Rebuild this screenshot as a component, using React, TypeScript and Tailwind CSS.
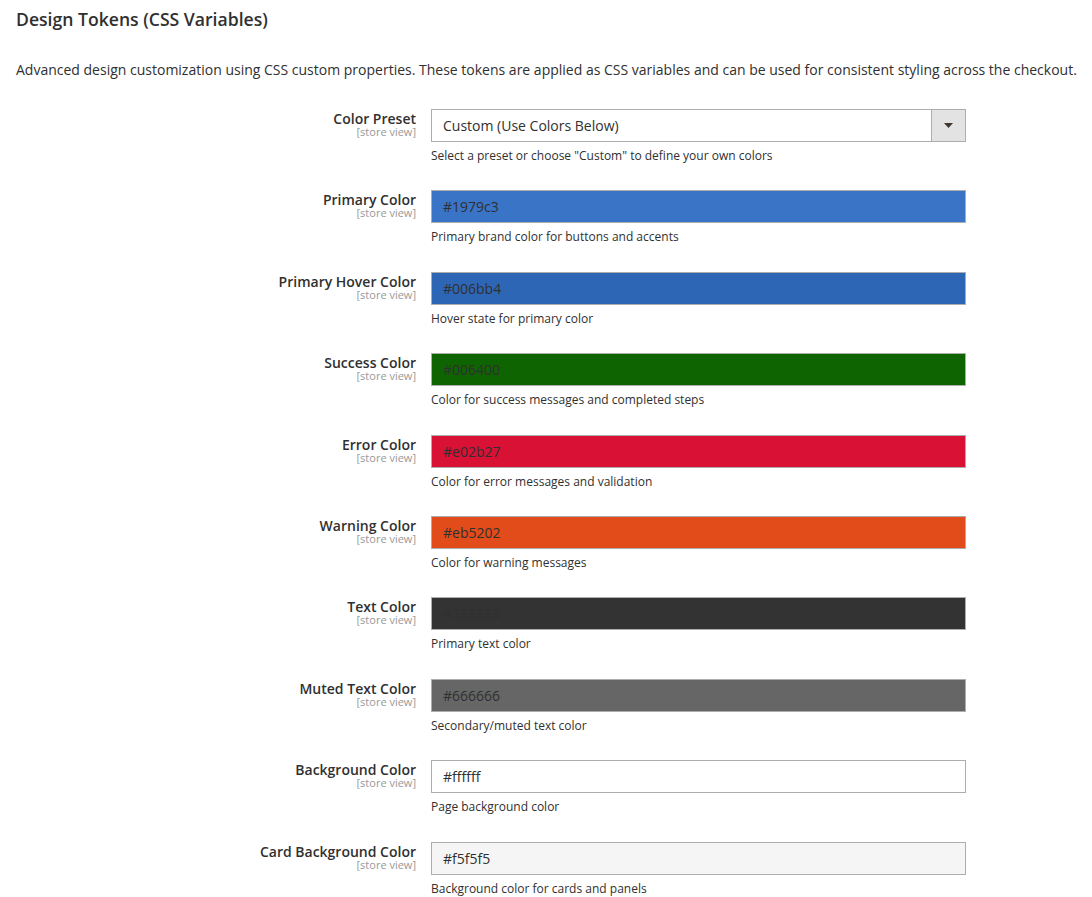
import React from "react";

interface ColorField {
  label: string;
  value: string;
  bg: string;
  note: string;
}

const fields: ColorField[] = [
  { label: "Primary Color", value: "#1979c3", bg: "bg-[#3a74c6]", note: "Primary brand color for buttons and accents" },
  { label: "Primary Hover Color", value: "#006bb4", bg: "bg-[#2e66b6]", note: "Hover state for primary color" },
  { label: "Success Color", value: "#006400", bg: "bg-[#0e6400]", note: "Color for success messages and completed steps" },
  { label: "Error Color", value: "#e02b27", bg: "bg-[#d81135]", note: "Color for error messages and validation" },
  { label: "Warning Color", value: "#eb5202", bg: "bg-[#e24c1a]", note: "Color for warning messages" },
  { label: "Text Color", value: "#333333", bg: "bg-[#333333]", note: "Primary text color" },
  { label: "Muted Text Color", value: "#666666", bg: "bg-[#666666]", note: "Secondary/muted text color" },
  { label: "Background Color", value: "#ffffff", bg: "bg-white", note: "Page background color" },
  { label: "Card Background Color", value: "#f5f5f5", bg: "bg-[#f5f5f5]", note: "Background color for cards and panels" },
];

const Label: React.FC<{ text: string }> = ({ text }) => (
  <div className="w-[400px] shrink-0 text-right pt-[3px]">
    <div className="text-[14px] leading-[14px] font-semibold text-[#303030]">{text}</div>
    <div className="text-[11px] leading-[12px] text-[#999999]">[store view]</div>
  </div>
);

const Row: React.FC<{ label: string; note: string; children: React.ReactNode }> = ({ label, note, children }) => (
  <div className="flex gap-[15px] pb-[26.4px]">
    <Label text={label} />
    <div className="w-[535px] shrink-0">
      {children}
      <p className="mt-[6px] text-[12px] leading-[16px] text-[#303030]">{note}</p>
    </div>
  </div>
);

export default function App() {
  return (
    <div className="min-h-screen bg-white px-4 pt-[8px] text-[#303030]" style={{ fontFamily: '"Open Sans", "Liberation Sans", sans-serif' }}>
      <h2 className="text-[17.6px] leading-[22px] font-semibold text-[#303030]">Design Tokens (CSS Variables)</h2>
      <p className="mt-[30px] text-[14px] leading-[20px] whitespace-nowrap">
        Advanced design customization using CSS custom properties. These tokens are applied as CSS variables and can be used for consistent styling across the checkout.
      </p>

      <div className="mt-[29px]">
        <Row label="Color Preset" note={'Select a preset or choose "Custom" to define your own colors'}>
          <div className="flex h-[33px] border border-[#adadad] bg-white">
            <div className="flex-1 flex items-center px-[11px] text-[14px]">Custom (Use Colors Below)</div>
            <div className="w-[34px] flex items-center justify-center border-l border-[#adadad] bg-[#e3e3e3]">
              <svg width="9" height="5" viewBox="0 0 9 5">
                <path d="M0 0h9L4.5 5z" fill="#41362f" />
              </svg>
            </div>
          </div>
        </Row>

        {fields.map((f) => (
          <Row key={f.label} label={f.label} note={f.note}>
            <div className={`flex items-center h-[33px] border border-[#adadad] px-[11px] text-[14px] text-[#303030] ${f.bg}`}>
              {f.value}
            </div>
          </Row>
        ))}
      </div>
    </div>
  );
}
